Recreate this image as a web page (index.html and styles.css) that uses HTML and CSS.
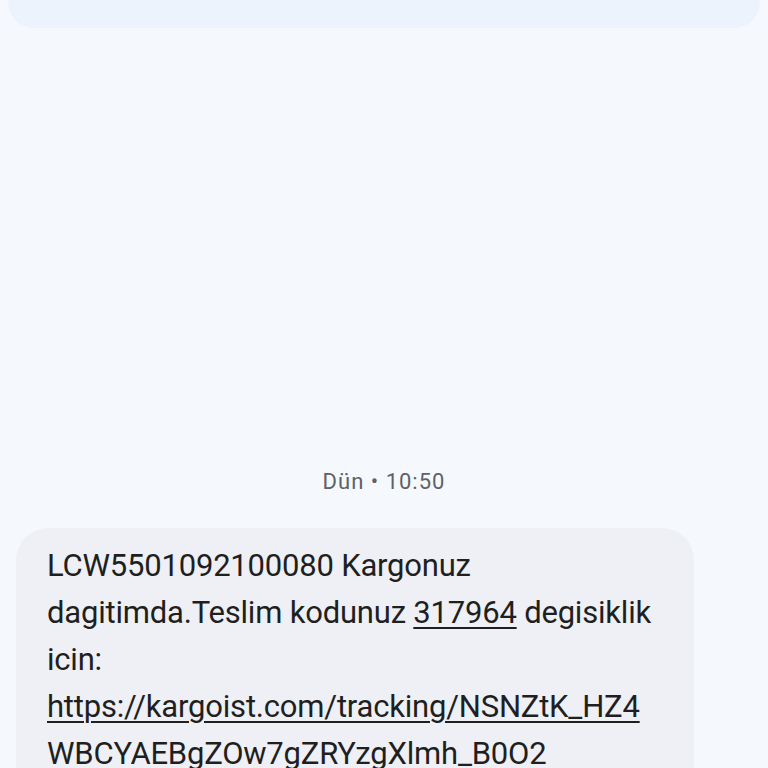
FILE: index.html
```html
<!DOCTYPE html>
<html lang="tr">
<head>
<meta charset="utf-8">
<link rel="stylesheet" href="styles.css">
</head>
<body>
<div class="screen">
  <div class="top-bubble"></div>
  <div class="spacer"></div>
  <div class="stamp">Dün • 10:50</div>
  <div class="msg">
    <p class="text">LCW5501092100080 Kargonuz dagitimda.Teslim kodunuz <span class="u">317964</span> degisiklik icin: <span class="u link">https://kargoist.com/tracking/NSNZtK_HZ4WBCYAEBgZOw7gZRYzgXlmh_B0O2</span></p>
  </div>
</div>
</body>
</html>
```
FILE: styles.css
```css
html, body {
  margin: 0;
  padding: 0;
  background: #f5f9fe;
}
.screen {
  width: 768px;
  height: 768px;
  overflow: hidden;
  display: flex;
  flex-direction: column;
  font-family: Roboto, "Noto Sans", sans-serif;
}
.top-bubble {
  margin: -40px 8px 0 8px;
  height: 68px;
  flex: none;
  background: #edf3fd;
  border-radius: 0 0 26px 26px;
}
.spacer {
  height: 439px;
  flex: none;
}
.stamp {
  text-align: center;
  font-size: 22px;
  letter-spacing: 1px;
  color: #5e6166;
  line-height: 30px;
  height: 30px;
  flex: none;
}
.msg {
  margin: 31px 0 0 16px;
  width: 678px;
  flex: none;
  background: #eef0f5;
  border-radius: 32px;
  padding: 14px 20px 30px 31px;
  box-sizing: border-box;
}
.text {
  margin: 0;
  font-size: 31px;
  letter-spacing: -0.2px;
  line-height: 47px;
  color: #1f1f1f;
  width: 610px;
}
.u {
  text-decoration: underline;
  text-decoration-thickness: 2px;
  text-underline-offset: 4px;
}
.link {
  overflow-wrap: anywhere;
}
```
